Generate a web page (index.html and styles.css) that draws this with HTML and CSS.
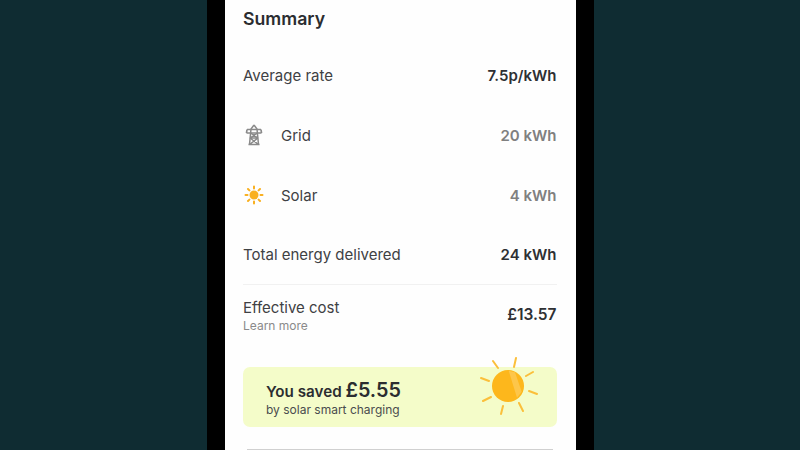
FILE: index.html
```html
<!DOCTYPE html>
<html lang="en">
<head>
    <meta charset="UTF-8">
    <meta name="viewport" content="width=device-width, initial-scale=1.0">
    <title>Summary</title>
    <link rel="stylesheet" href="styles.css">
</head>
<body>
    <div class="phone">
        <div class="screen">
            <h1 class="title">Summary</h1>

            <div class="row">
                <span class="label">Average rate</span>
                <span class="value">7.5p/kWh</span>
            </div>

            <div class="row">
                <span class="label">
                    <svg class="icon" viewBox="0 0 22 22" fill="none" stroke="#8a8a8a" stroke-width="1.5">
                        <path d="M11 1 8 5 6.500 20.500M11 1l3 4 1.500 15.500"/>
                        <path d="M4 5.500h14M3.500 9h15M4 5.500 3.500 9M18 5.500l.5 3.500" stroke-width="1.700"/>
                        <path d="M7.500 9l7.500 5M14.500 9 7 14M7 14h8M7 14l8.500 6.500M15 14l-8.500 6.500M5.500 20.500h11"/>
                    </svg>
                    Grid
                </span>
                <span class="value muted">20 kWh</span>
            </div>

            <div class="row">
                <span class="label">
                    <svg class="icon" viewBox="0 0 22 22" fill="none" stroke="#f9b020" stroke-width="2" stroke-linecap="round">
                        <circle cx="11" cy="11" r="4.500" fill="#f9b020" stroke="none"/>
                        <path d="M11 2.500v2M11 17.500v2M2.500 11h2M17.500 11h2M5 5l1.400 1.400M15.600 15.600 17 17M5 17l1.400-1.400M15.600 6.400 17 5"/>
                    </svg>
                    Solar
                </span>
                <span class="value muted">4 kWh</span>
            </div>

            <div class="row row-total">
                <span class="label">Total energy delivered</span>
                <span class="value">24 kWh</span>
            </div>

            <div class="row cost-row">
                <div class="cost-text">
                    <div class="label">Effective cost</div>
                    <div class="learn">Learn more</div>
                </div>
                <span class="value cost">£13.57</span>
            </div>

            <div class="saved">
                <div class="saved-main">You saved <span class="saved-amount">£5.55</span></div>
                <div class="saved-sub">by solar smart charging</div>
                <svg class="sun" viewBox="478 355 62 62" fill="none" stroke="#fbbf3a" stroke-width="2" stroke-linecap="round">
                    <path d="M493 361l5 7M516 358l-2 9M533 372l-7 4M529 391l8 3M519 403l4 8M503 406l-2 8M491 397l-8 4M481 378l8 3"/>
                    <circle cx="508" cy="386" r="16" fill="#fdb71c" stroke="none"/>
                    <path d="M508.700 370.700 515 372.300l6.700 19.400-4.700 6z" fill="#fdc64a" stroke="none"/>
                </svg>
            </div>

            <div class="next-line"></div>
        </div>
    </div>
</body>
</html>
```

FILE: styles.css
```css
body {
    margin: 0;
    height: 450px;
    overflow: hidden;
    background-color: #0f2c32;
    font-family: Inter, "Liberation Sans", sans-serif;
    color: #333538;
}

.phone {
    width: 351px;
    height: 450px;
    margin: 0 auto;
    padding: 0 18px;
    background-color: #000;
}

.screen {
    height: 450px;
    padding: 0 19px 0 18.500px;
    box-sizing: border-box;
    background-color: #fefefe;
    overflow: hidden;
}

.title {
    margin: 0;
    height: 45px;
    padding-top: 8px;
    box-sizing: border-box;
    font-size: 17.700px;
    line-height: 22px;
    font-weight: 600;
    color: #2b2d30;
}

.row {
    display: flex;
    justify-content: space-between;
    align-items: center;
    height: 60px;
    font-size: 15px;
}

.row-total {
    height: 59px;
    padding-bottom: 1px;
    box-sizing: border-box;
}

.label {
    display: flex;
    align-items: center;
    color: #3f4144;
}

.icon {
    width: 22px;
    height: 22px;
    margin-right: 16px;
}

.value {
    font-weight: 600;
    font-size: 15px;
    color: #2e3033;
}

.value.muted {
    color: #808080;
}

.value.cost {
    font-size: 15.500px;
}

.cost-row {
    border-top: 1px solid #f1f1f1;
    height: 59px;
    box-sizing: border-box;
}

.cost-text {
    padding-top: 2px;
}

.learn {
    margin-top: 1px;
    font-size: 12px;
    color: #8a8a8a;
}

.saved {
    position: relative;
    height: 60px;
    margin-top: 24px;
    padding: 12px 23px 0;
    box-sizing: border-box;
    background-color: #f4fcc9;
    border-radius: 7px;
}

.saved-main {
    font-size: 15.200px;
    line-height: 22px;
    font-weight: 600;
    color: #2b2d30;
}

.saved-amount {
    font-size: 19.800px;
}

.saved-sub {
    margin-top: -1px;
    font-size: 12px;
    line-height: 15px;
    color: #4a4c4e;
}

.sun {
    position: absolute;
    right: 17px;
    top: -12px;
    width: 62px;
    height: 62px;
    overflow: visible;
}

.next-line {
    height: 1px;
    margin: 22px 4px 0 4px;
    background-color: #d0d0d0;
}
```
